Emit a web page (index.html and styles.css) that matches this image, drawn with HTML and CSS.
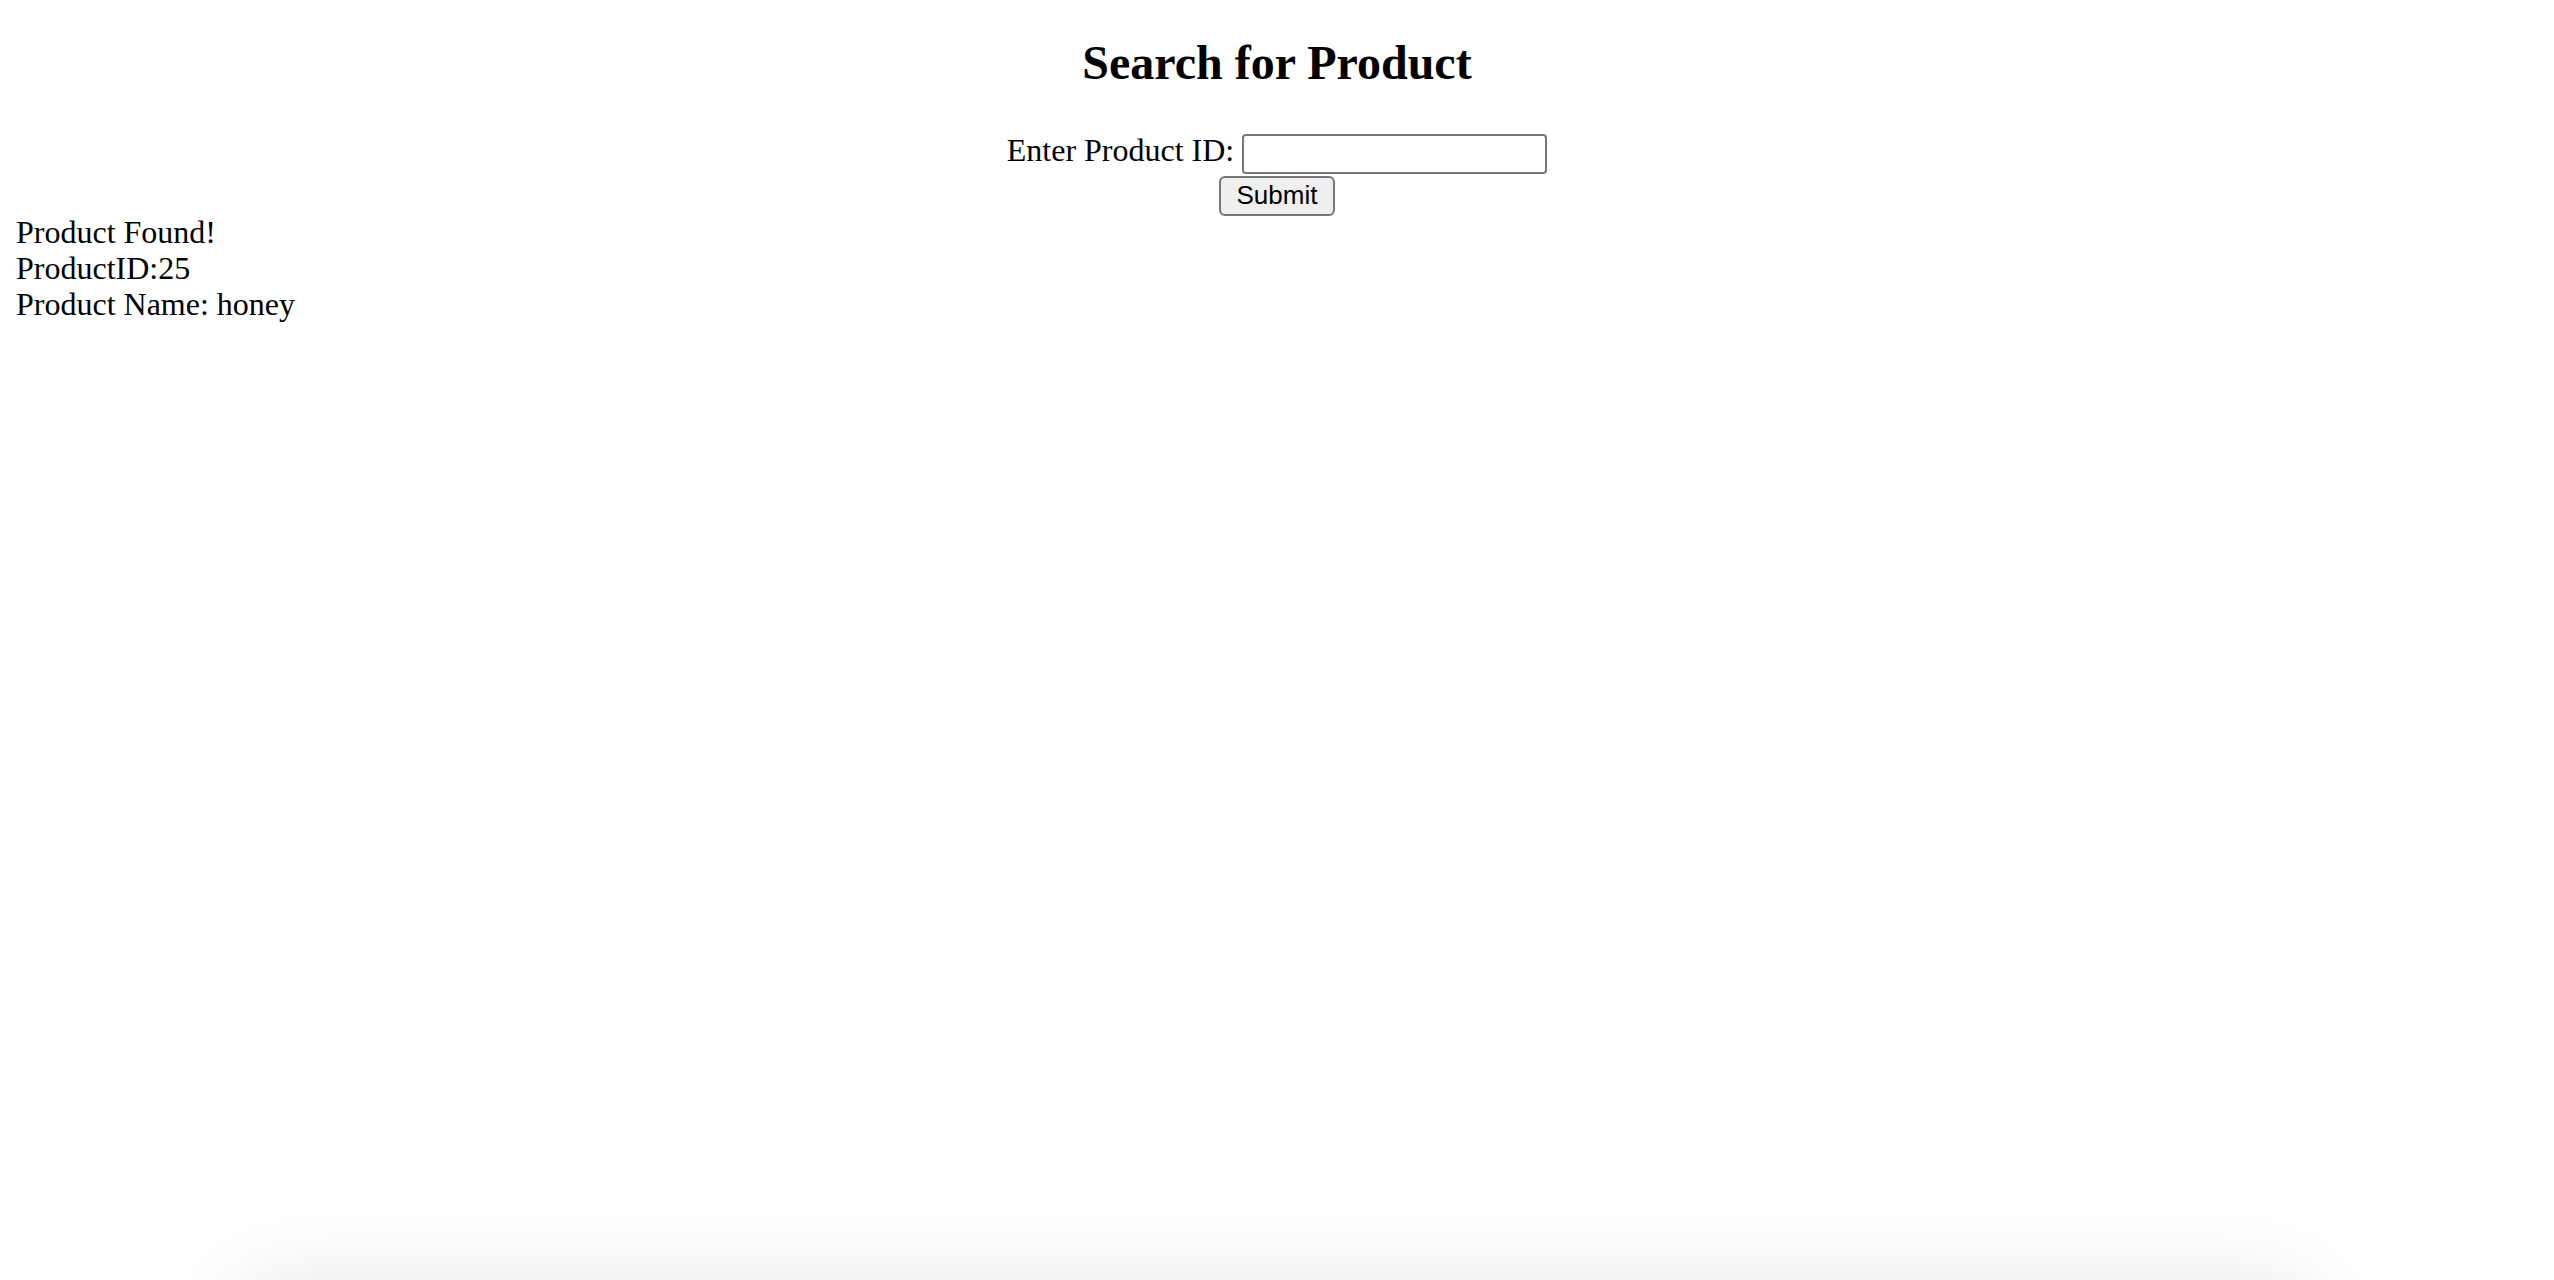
FILE: index.html
```html
<!DOCTYPE html>
<html>
<head>
<meta charset="utf-8">
<title>Search for Product</title>
<link rel="stylesheet" href="styles.css">
</head>
<body>
<h2 class="title">Search for Product</h2>
<form class="search-form">
  <label class="field-label" for="pid">Enter Product ID:</label>
  <input class="text-input" id="pid" type="text"><br>
  <button class="submit-btn" type="button">Submit</button>
</form>
<div class="result">
  <div class="result-line">Product Found!</div>
  <div class="result-line">ProductID:25</div>
  <div class="result-line">Product Name: honey</div>
</div>
<div class="bottom-shade"></div>
</body>
</html>
```
FILE: styles.css
```css
html {
  background: #ffffff;
  overflow: hidden;
}
body {
  margin: 0 16px;
  padding: 0;
  font-family: "Liberation Serif", "Times New Roman", serif;
  font-size: 32px;
  line-height: normal;
  color: #000;
}
.title {
  font-size: 48px;
  font-weight: bold;
  line-height: normal;
  margin: 35px 0 42px;
  text-align: center;
}
.search-form {
  text-align: center;
  margin: 0;
}
.text-input {
  box-sizing: border-box;
  width: 305px;
  height: 40px;
  border: 2px solid #767676;
  border-radius: 4px;
  padding: 2px 4px;
  margin: 0;
  font-family: "Liberation Sans", Arial, Helvetica, sans-serif;
  font-size: 25px;
  line-height: normal;
  vertical-align: -1px;
  background: #fff;
}
.submit-btn {
  box-sizing: border-box;
  width: 116px;
  height: 40px;
  margin: 2px 0 0;
  padding: 0;
  border: 2px solid #767676;
  border-radius: 6px;
  background: #efefef;
  font-family: "Liberation Sans", Arial, Helvetica, sans-serif;
  font-size: 26px;
  color: #000;
  vertical-align: top;
}
.result {
  margin: -2px 0 0;
  line-height: 36px;
}
.bottom-shade {
  position: fixed;
  left: 230px;
  right: 236px;
  top: 1282px;
  height: 200px;
  border-radius: 60px;
  box-shadow: 0 0 80px 0 rgba(0, 0, 0, 0.11);
}
```
